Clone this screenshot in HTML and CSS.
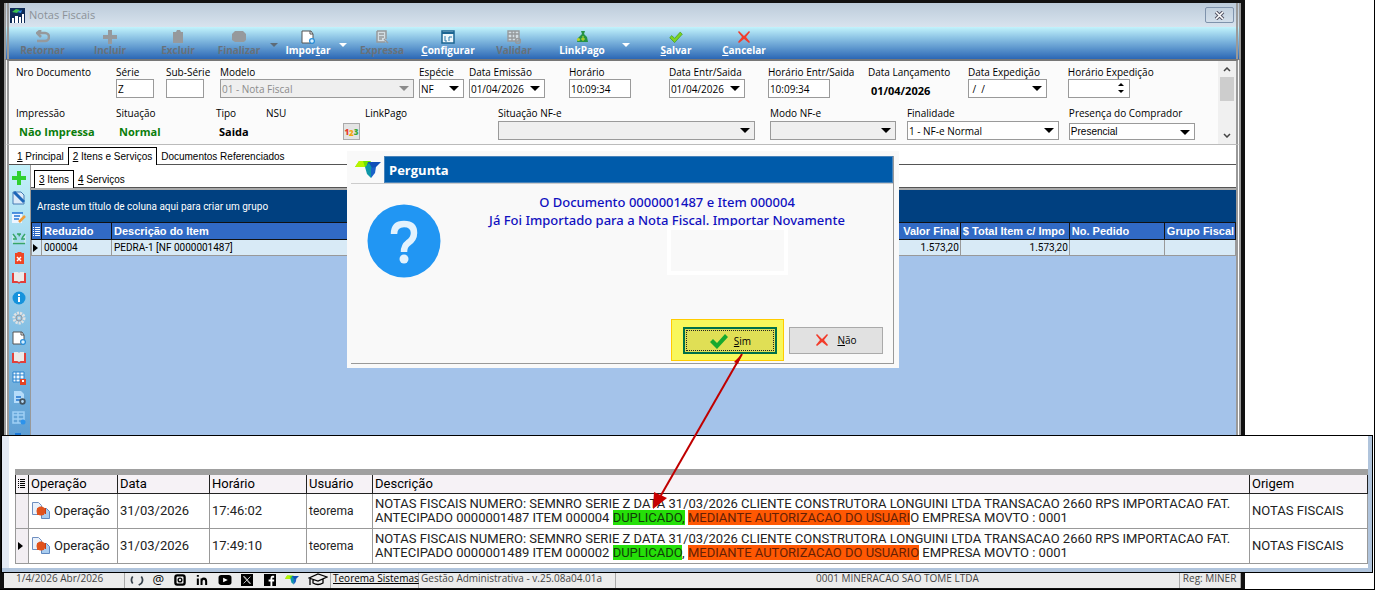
FILE: index.html
```html
<!DOCTYPE html>
<html lang="pt-BR">
<head>
<meta charset="utf-8">
<title>Notas Fiscais</title>
<link rel="stylesheet" href="styles.css">
</head>
<body>
<svg class="defs" aria-hidden="true">
  <symbol id="i-check" viewBox="0 0 20 20"><path d="M1 11 4 8l4 4L16 3l3 3L8 18z"/></symbol>
  <symbol id="i-x" viewBox="0 0 14 14"><path d="M1 2 2 1l5 5 5-5 1 1-4 5 4 5-1 1-5-4-5 4-1-1 4-5z"/></symbol>
  <symbol id="i-logo" viewBox="0 0 26 17"><path d="M4 0h12l-3 6H0z" fill="#6fe300"/><path d="M0 6 4 0h4l2 6z" fill="#b8f500"/><path d="M13 1h13l-6 6-4 1-4-4z" fill="#1150b8"/><path d="m10 6 4-4 3 5-1 10-4-4z" fill="#0e97a8"/><path d="m16 7 5-1-1 6-4 5z" fill="#1a62c8"/></symbol>
  <symbol id="i-book" viewBox="0 0 14 12"><path d="M0 1h2v8h3l2 1 2-1h3V1h2v10H8l-1 1-1-1H0z" fill="#e2403a"/><path d="M2 0h4l1 1 1-1h4v9H8l-1 1-1-1H2z" fill="#eceae8"/></symbol>
  <symbol id="i-page" viewBox="0 0 14 14"><path d="M1 1h9l2 3v9H1z" fill="#fff" stroke="#555"/><path d="M9 1v3h3" fill="none" stroke="#555"/><circle cx="11" cy="11" r="2.4" fill="#d5efff" stroke="#2b8ed8" stroke-width="1.3"/></symbol>
  <symbol id="i-list" viewBox="0 0 7 9"><path d="M0 .5h1M2 .5h5M0 2.500h1M2 2.500h5M0 4.500h1M2 4.500h5M0 6.500h1M2 6.500h5M0 8.500h1M2 8.500h5" stroke="currentColor" fill="none"/></symbol>
  <symbol id="i-op" viewBox="0 0 18 17"><path d="M.5.5h6l3 3v9h-9z" fill="#eaf1fb" stroke="#6f8fc0"/><path d="M9.500 6.500h5l3 3v7h-8z" fill="#a9cdf0" stroke="#5f88c0"/><path d="M5 6h7v7H5z" fill="#e0531d"/><circle cx="9" cy="9" r="4.500" fill="#e0531d"/><path d="M13.500 6v6" stroke="#c83c12"/></symbol>
</svg>
<div class="screen">
  <main class="app">
    <header class="titlebar">
      <svg class="app-icon" viewBox="0 0 15 15"><path fill="#0d2b57" d="M0 0h15v15H0z"/><path d="M2 4 6 1l4 1-3 3z" fill="#39c04a"/><path d="m7 4 5-2-1 3z" fill="#2a86e8"/><path d="M2 10h2v5H2zM5 8h3v7H5zM9 9h2v6H9zM12 6h2v9h-2z" fill="#fff"/></svg>
      <h1>Notas Fiscais</h1>
      <button class="close" aria-label="Fechar"><svg viewBox="0 0 11 9"><path d="m2 1 7 7M9 1 2 8" stroke="#556" stroke-width="3.600"/><path d="m2 1 7 7M9 1 2 8" stroke="#fff" stroke-width="1.600"/></svg></button>
    </header>
    <nav class="toolbar">
      <button class="tool" disabled><svg viewBox="0 0 14 14"><path d="M2 3h7a3 3 0 0 1 0 8H1M5 0 1 3l4 4" fill="none" stroke="#96999c" stroke-width="2.600"/></svg>Retornar</button>
      <button class="tool" disabled><svg viewBox="0 0 14 14"><path d="M5 0h4v5h5v4H9v5H5V9H0V5h5z" fill="#96999c"/></svg>Incluir</button>
      <button class="tool" disabled><svg viewBox="0 0 14 14"><path d="M2 2h3l1-2h3l1 2h2v11H2z" fill="#96999c"/></svg>Excluir</button>
      <button class="tool slim" disabled><svg viewBox="0 0 14 14"><path d="M3 1h8l3 3v6l-2 2H3l-3-2V4z" fill="#96999c"/></svg>Finalizar</button>
      <button class="drop off" aria-label="Mais opções de finalizar" disabled></button>
      <button class="tool slim"><svg><use href="#i-page"/></svg><span>Impor<u>t</u>ar</span></button>
      <button class="drop" aria-label="Mais opções de importar"></button>
      <button class="tool mid" disabled><svg viewBox="0 0 14 14"><path d="M2 1h9v11H2z" fill="#d3dde3"/><path d="M2 1h9v8M2 1v11h8M4 4h5M4 7h5M4 9h3M9 9l4 4" fill="none" stroke="#96999c" stroke-width="1.500"/></svg>Expressa</button>
      <button class="tool"><svg viewBox="0 0 14 14"><path d="M1 1h12v12H1z" fill="#eef7fb" stroke="#1c6592" stroke-width="1.500"/><path d="M1 3h12" stroke="#1c6592" stroke-width="2"/><path d="M4 6v5h2M8 11V7h3" fill="none" stroke="#2d7cae"/></svg><span><u>C</u>onfigurar</span></button>
      <button class="tool mid" disabled><svg viewBox="0 0 14 14"><path d="M1 1h11v10H1z" fill="#d3dde3"/><path d="M1 1h11v10H1zM1 4h11M1 8h8M5 1v10M8 1v7" fill="none" stroke="#96999c" stroke-width="1.400"/><circle cx="11" cy="11" r="2.500" fill="none" stroke="#96999c" stroke-width="1.500"/></svg>Validar</button>
      <button class="tool wide"><svg viewBox="0 0 14 14"><path d="M6 1h4l-1 3 3 3 1 5H2l1-4 4-4z" fill="#269344"/><path d="M8 6v5M6 9h4" stroke="#cfe02b"/><circle cx="3.500" cy="9.500" r="1.600" fill="#b7d426"/></svg>LinkPago</button>
      <button class="drop" aria-label="Mais opções de LinkPago"></button>
      <button class="tool save"><svg class="green"><use href="#i-check"/></svg><span><u>S</u>alvar</span></button>
      <button class="tool"><svg class="red"><use href="#i-x"/></svg><span><u>C</u>ancelar</span></button>
    </nav>
    <section class="form">
      <div class="fields">
        <div class="row first">
          <div class="field"><span>Nro Documento</span></div>
          <div class="field"><label for="serie">Série</label><input id="serie" class="w38" value="Z"></div>
          <div class="field"><label for="sub">Sub-Série</label><input id="sub" class="w38"></div>
          <div class="field"><label for="modelo">Modelo</label><div class="combo dis w194"><select id="modelo" disabled><option>01 - Nota Fiscal</option></select></div></div>
          <div class="field"><label for="especie">Espécie</label><div class="combo w45"><select id="especie"><option>NF</option></select></div></div>
          <div class="field"><label for="emissao">Data Emissão</label><div class="combo w76"><select id="emissao"><option>01/04/2026</option></select></div></div>
          <div class="field"><label for="hora">Horário</label><input id="hora" class="w62" value="10:09:34"></div>
          <div class="field"><label for="entr">Data Entr/Saida</label><div class="combo w76"><select id="entr"><option>01/04/2026</option></select></div></div>
          <div class="field"><label for="hentr">Horário Entr/Saida</label><input id="hentr" class="w62" value="10:09:34"></div>
          <div class="field"><span>Data Lançamento</span><strong class="date">01/04/2026</strong></div>
          <div class="field"><label for="exp">Data Expedição</label><div class="combo w79"><select id="exp"><option>&nbsp;/&nbsp; /</option></select></div></div>
          <div class="field"><label for="hexp">Horário Expedição</label><div class="spin"><input id="hexp" class="w62"><i class="up"></i><i class="down"></i></div></div>
        </div>
        <div class="row second">
          <div class="field"><span>Impressão</span><strong class="ok clip">Não Impressa</strong></div>
          <div class="field"><span>Situação</span><strong class="ok">Normal</strong></div>
          <div class="field"><span>Tipo</span><strong>Saida</strong></div>
          <div class="field"><span>NSU</span><button class="nums" aria-label="Numeração"><b>1</b><b>2</b><b>3</b></button></div>
          <div class="field"><span>LinkPago</span></div>
          <div class="field"><label for="sit">Situação NF-e</label><div class="combo grey w257"><select id="sit"><option></option></select></div></div>
          <div class="field"><label for="modo">Modo NF-e</label><div class="combo grey w126"><select id="modo"><option></option></select></div></div>
          <div class="field"><label for="fin">Finalidade</label><div class="combo w152"><select id="fin"><option>1 - NF-e Normal</option></select></div></div>
          <div class="field"><label for="pres">Presença do Comprador</label><div class="combo gdi w126"><select id="pres"><option>Presencial</option></select></div></div>
        </div>
      </div>
      <div class="scroll" aria-hidden="true"><svg viewBox="0 0 8 5"><path d="m1 4 3-3 3 3"/></svg><i></i><svg viewBox="0 0 8 5"><path d="m1 1 3 3 3-3"/></svg></div>
    </section>
    <div class="tabs main-tabs">
      <button><u>1</u> Principal</button><button class="on"><u>2</u> Itens e Serviços</button><button>Documentos Referenciados</button>
    </div>
    <div class="work">
      <aside class="side">
        <svg viewBox="0 0 14 14"><path d="M5 0h4v5h5v4H9v5H5V9H0V5h5z" fill="#2fd02f"/></svg>
        <svg viewBox="0 0 14 14"><path d="M1 1h8l3 3v9H1z" fill="#dceaf8" stroke="#467cb4"/><path d="m2 1 10 10" stroke="#1c66b8" stroke-width="3"/></svg>
        <svg viewBox="0 0 14 14"><path d="M0 2h10v10H0z" fill="#edf5ff"/><path d="M0 2h11M2 5h6M2 8h5" stroke="#2273d6" stroke-width="1.500"/><path d="m7 11 6-6" stroke="#f19b38" stroke-width="2.500"/></svg>
        <svg viewBox="0 0 14 14"><path d="M1 4v8h12V4" stroke="#e4f4f2" fill="none"/><path d="M1 12.500h12M1 3l3 4M13 3l-3 4M5 3h4M1 8h4M9 8h4" stroke="#37a568" stroke-width="1.400" fill="none"/><path d="M6 3h3L7 6z" fill="#37a568"/></svg>
        <svg viewBox="0 0 14 14"><path d="M3 2h2l1-1h3l1 1h2v11H3z" fill="#ee4724"/><path d="m5 6 4 4M9 6l-4 4" stroke="#fff" stroke-width="1.500"/></svg>
        <svg><use href="#i-book"/></svg>
        <svg viewBox="0 0 14 14"><circle cx="7" cy="7" r="6.500" fill="#1593dc"/><path d="M7 3v2M7 6v5" stroke="#fff" stroke-width="2"/></svg>
        <svg viewBox="0 0 14 14"><circle cx="7" cy="7" r="5" fill="none" stroke="#e2e2e2" stroke-width="3" stroke-dasharray="2 1"/><circle cx="7" cy="7" r="3" fill="none" stroke="#9b9ba0"/><circle cx="7" cy="7" r="1.500" fill="#ddd"/></svg>
        <svg><use href="#i-page"/></svg>
        <svg><use href="#i-book"/></svg>
        <svg viewBox="0 0 14 14"><path d="M1 1h11v10H1z" fill="#f2faff"/><path d="M1 1h11v10H1zM1 4h11M1 8h11M4 1v10M8 1v10" fill="none" stroke="#2b83cf"/><path d="M8 8h6v6H8z" fill="#e44424"/><path d="M10 9h2v2h-2z" fill="#fff"/></svg>
        <svg viewBox="0 0 14 14"><path d="M2 0h7l3 3v9H2z" fill="#b5dcfa"/><path d="M4 6h5M4 9h4" stroke="#1f73d0" stroke-width="1.500"/><circle cx="10.500" cy="10.500" r="2.300" fill="none" stroke="#43535f" stroke-width="1.800"/></svg>
        <svg viewBox="0 0 14 14"><path d="M1 1h11v11H1zM1 4h11M1 8h11M6 1v11" fill="none" stroke="#9fd0f5" stroke-width="1.500"/><circle cx="11" cy="11" r="2.500" fill="#2c93ec"/></svg>
        <svg viewBox="0 0 14 14"><path d="M3 2h6v5H3z" fill="#1a78d8"/></svg>
      </aside>
      <section class="content">
        <div class="tabs sub"><button class="on"><u>3</u> Itens</button><button><u>4</u> Serviços</button></div>
        <div class="group">Arraste um título de coluna aqui para criar um grupo</div>
        <table class="items">
          <colgroup><col class="c-mark"><col class="c-red"><col class="c-desc"><col class="c-val"><col class="c-tot"><col class="c-ped"><col class="c-grp"></colgroup>
          <thead><tr><th><svg class="list"><use href="#i-list"/></svg></th><th>Reduzido</th><th>Descrição do Item</th><th class="num">Valor Final</th><th>$ Total Item c/ Impo</th><th>No. Pedido</th><th>Grupo Fiscal</th></tr></thead>
          <tbody><tr><td class="mark"><i class="caret"></i></td><td>000004</td><td>PEDRA-1 [NF 0000001487]</td><td class="num">1.573,20</td><td class="num">1.573,20</td><td></td><td></td></tr></tbody>
        </table>
      </section>
    </div>
    <footer class="status">
      <span class="s-date">1/4/2026 Abr/2026</span>
      <span class="s-icons">
        <svg viewBox="0 0 16 14"><path d="M3 3a5 6 0 0 0 0 8M13 3a5 6 0 0 1 0 8l-3 2" fill="none" stroke="#37414b" stroke-width="2"/></svg>
        <b>@</b>
        <svg viewBox="0 0 13 13"><rect x="1.500" y="1.500" width="10" height="10" rx="2" fill="none" stroke="#000" stroke-width="2.500"/><circle cx="6.500" cy="6.500" r="2" fill="none" stroke="#000" stroke-width="1.500"/></svg>
        <svg viewBox="0 0 13 13"><path d="M2 5v7M2 1v2M6 12V5M6 8c0-4 5-4 5 0v4" fill="none" stroke="#000" stroke-width="2.200"/></svg>
        <svg viewBox="0 0 14 13"><rect y="1" width="14" height="11" rx="3"/><path d="m5 4 5 2.500L5 9z" fill="#fff"/></svg>
        <svg viewBox="0 0 14 14"><path d="M0 0h14v14H0z"/><path d="m3 3 7 8h1L4 3zM11 3l-8 8" fill="none" stroke="#ddd"/></svg>
        <svg viewBox="0 0 13 13"><path d="M0 0h13v13H0z"/><path d="M11 3H9Q8 3 8 5v8M5 7h6" fill="none" stroke="#fff" stroke-width="2"/></svg>
        <svg><use href="#i-logo"/></svg>
        <svg class="cap" viewBox="0 0 20 14"><path d="m1 5 9-4 9 3-9 4zM5 6v4q5 3 10 0V6M2 5v7" fill="#eee" stroke="#000" stroke-width="1.300"/></svg>
      </span>
      <a class="s-link" href="#">Teorema Sistemas</a>
      <span class="s-ver">Gestão Administrativa - v.25.08a04.01a</span>
      <span class="s-firm">0001 MINERACAO SAO TOME LTDA</span>
      <span class="s-reg">Reg: MINER</span>
    </footer>
  </main>

  <section class="dialog" role="dialog" aria-labelledby="dlg">
    <div class="frame">
      <header><svg><use href="#i-logo"/></svg><h2 id="dlg">Pergunta</h2></header>
      <div class="ask">
        <svg class="quest" viewBox="0 0 74 74"><circle cx="37" cy="37" r="36.500" fill="#2196f3"/><path d="M27 30q0-10 10-10t10 9q0 6-6 10-4 3-4 9" fill="none" stroke="#e3f2fd" stroke-width="6.500"/><circle cx="37" cy="55" r="4.500" fill="#e3f2fd"/></svg>
        <p>O Documento 0000001487 e Item 000004<br>Já Foi Importado para a Nota Fiscal. Importar Novamente</p>
      </div>
      <div class="answers">
        <div class="glow"><button class="yes"><svg><use href="#i-check"/></svg><span><u>S</u>im</span></button></div>
        <button class="no"><svg><use href="#i-x"/></svg><span><u>N</u>ão</span></button>
      </div>
    </div>
    <div class="blank"></div>
  </section>

  <section class="log">
    <table>
      <colgroup><col class="l-mark"><col class="l-op"><col class="l-date"><col class="l-time"><col class="l-user"><col><col class="l-orig"></colgroup>
      <thead><tr><th><svg class="list"><use href="#i-list"/></svg></th><th>Operação</th><th>Data</th><th>Horário</th><th>Usuário</th><th>Descrição</th><th>Origem</th></tr></thead>
      <tbody>
        <tr><td class="mark"></td><td><div class="op"><svg><use href="#i-op"/></svg>Operação</div></td><td>31/03/2026</td><td>17:46:02</td><td class="user">teorema</td><td>NOTAS FISCAIS NUMERO: SEMNRO SERIE Z DATA 31/03/2026 CLIENTE CONSTRUTORA LONGUINI LTDA TRANSACAO 2660 RPS IMPORTACAO FAT.<br>ANTECIPADO 0000001487 ITEM 000004 <mark class="g">DUPLICADO,</mark> <mark class="o">MEDIANTE AUTORIZACAO DO USUARI</mark>O EMPRESA MOVTO : 0001</td><td>NOTAS FISCAIS</td></tr>
        <tr><td class="mark"><i class="caret"></i></td><td><div class="op"><svg><use href="#i-op"/></svg>Operação</div></td><td>31/03/2026</td><td>17:49:10</td><td class="user">teorema</td><td>NOTAS FISCAIS NUMERO: SEMNRO SERIE Z DATA 31/03/2026 CLIENTE CONSTRUTORA LONGUINI LTDA TRANSACAO 2660 RPS IMPORTACAO FAT.<br>ANTECIPADO 0000001489 ITEM 000002 <mark class="g">DUPLICADO</mark>, <mark class="o">MEDIANTE AUTORIZACAO DO USUARIO</mark> EMPRESA MOVTO : 0001</td><td>NOTAS FISCAIS</td></tr>
      </tbody>
    </table>
  </section>
  <svg class="arrow" viewBox="0 0 92 156" aria-hidden="true"><path d="M90 1 8 144" stroke="#c00000" stroke-width="2"/><path d="m90 1-4 10-4-2z" fill="#c00000"/><path d="m1 156 1-17 13 6z" fill="#c80000"/></svg>
</div>
</body>
</html>
```

FILE: styles.css
```css
* { box-sizing: border-box; }
body { margin: 0; background: #fff; font: 10px/14px "Open Sans", "Noto Sans", sans-serif; color: #000; }
button, input, select { font: inherit; color: inherit; margin: 0; padding: 0; border: 0; background: none; }
svg { display: block; flex: none; }
.defs { position: absolute; width: 0; height: 0; }
.screen { position: relative; min-height: 100vh; display: flex; border: solid #000; border-width: 0 1px 1px 0; }

/* Main window */
.app { width: 90.6%; display: flex; flex-direction: column; padding: 3px 4px 1px; background: #111; }
.titlebar, .toolbar, .form, .main-tabs, .work { border: 0 solid #777; border-left: 5px double #999; border-right: 5px double #999; }
.titlebar { height: 24px; display: flex; align-items: center; gap: 4px; padding-left: 1px; background: linear-gradient(#bccbda, #d8e3ee); }
.app-icon { width: 15px; height: 15px; }
h1 { flex: 1; margin: 0; font-size: 11px; font-weight: 400; color: #8c9298; }
.close { width: 29px; height: 16px; margin-right: 2px; display: grid; place-items: center; border: 1px solid #7f93ac; border-radius: 2px; }
.close svg { width: 11px; height: 9px; }
.toolbar { height: 32px; display: flex; background: linear-gradient(#c2f3fc, #8bc2e4 35%, #2b67b5); }
.tool { flex: none; width: 68px; padding-top: 3px; display: flex; flex-direction: column; align-items: center; font-weight: 700; line-height: 12px; color: #fff; }
.tool:first-child { width: 67px; }
.tool svg { width: 14px; height: 14px; }
.tool:disabled { color: #68717a; }
.tool.slim { width: 54px; }
.tool.mid { width: 64px; }
.tool.wide { width: 72px; }
.tool.save { margin-left: 9px; }
.green { fill: #7ed321; stroke: #3d9b1b; }
.red { fill: #f23b2a; }
.drop { flex: none; width: 15px; display: grid; place-items: center; }
.drop::after { content: ""; border: 4px solid transparent; border-top-color: #fff; border-bottom: 0; margin-top: 4px; }
.drop.off::after { border-top-color: #5d6b78; }

/* Form */
.form { height: 86px; display: flex; background: #fbfbfb; border-top: 2px solid #777; border-bottom: 1px solid #bbb; }
.fields { flex: 1; min-width: 0; padding: 4px 0 0 7px; }
.row { display: grid; height: 41px; }
.first { grid-template-columns: minmax(0,100fr) minmax(0,50fr) minmax(0,54fr) minmax(0,199fr) minmax(0,50fr) minmax(0,100fr) minmax(0,100fr) minmax(0,99fr) minmax(0,100fr) minmax(0,100fr) minmax(0,100fr) minmax(0,150fr); }
.second { grid-template-columns: minmax(0,100fr) minmax(0,100fr) minmax(0,50fr) minmax(0,99fr) minmax(0,133fr) minmax(0,272fr) minmax(0,137fr) minmax(0,162fr) minmax(0,149fr); }
.field { display: flex; flex-direction: column; white-space: nowrap; }
.field > label, .field > span { height: 14px; }
.field strong { padding: 4px 0 0 3px; font: 700 11px/16px "Open Sans", sans-serif; }
.field .ok { color: #0a7d0a; }
.clip { width: 82px; overflow: hidden; }
input, .combo { height: 19px; border: 1px solid #9a9a9a; background: #fff; padding-left: 1px; }
.w38 { width: 38px; } .w45 { width: 45px; } .w62 { width: 62px; } .w76 { width: 76px; } .w79 { width: 79px; } .w126 { width: 126px; } .w152 { width: 152px; } .w194 { width: 194px; } .w257 { width: 257px; }
.combo { position: relative; }
.combo select { appearance: none; width: 100%; height: 17px; display: block; opacity: 1; }
.combo::after { content: ""; position: absolute; right: 4px; top: 6px; border: 5px solid transparent; border-top-color: #000; border-bottom: 0; pointer-events: none; }
.dis { background: #efefef; color: #8b8b8b; }
.dis::after { border-top-color: #8b8b8b; }
.grey { background: #efefef; }
.second .combo { margin-top: 1px; }
.second .gdi { height: 17px; margin-top: 3px; font-family: "Liberation Sans", sans-serif; }
.gdi select { height: 15px; }
.spin { position: relative; width: 62px; }
.spin input { display: block; }
.spin i { position: absolute; right: 6px; border: 3px solid transparent; }
.spin .up { top: 4px; border-bottom-color: #000; border-top: 0; }
.spin .down { top: 11px; border-top-color: #000; border-bottom: 0; }
.nums { width: 17px; height: 17px; margin: 3px 5px 0 0; align-self: flex-end; display: flex; align-items: center; justify-content: center; background: #e4e4e4; border: 1px solid #aaa; font: 700 8px/12px "Open Sans", sans-serif; }
.nums b { color: #e83c2c; } .nums b + b { color: #f4a70c; padding-top: 3px; } .nums b + b + b { color: #38a838; padding: 0; }
.scroll { width: 18px; padding: 6px 0; display: flex; flex-direction: column; align-items: center; background: #f0f0f0; }
.scroll svg { width: 8px; height: 5px; fill: none; stroke: #444; stroke-width: 1.500; }
.scroll i { width: 14px; height: 24px; margin: 5px 0 auto; background: #cdcdcd; }

/* Tabs and grid */
.tabs { height: 20px; display: flex; align-items: flex-end; background: #fff; font: 10px/14px "Liberation Sans", sans-serif; box-shadow: inset 0 -1px #555; }
.main-tabs { padding-left: 4px; }
.tabs button { height: 16px; padding: 0 4px; white-space: nowrap; }
.tabs .on { height: 18px; background: #fff; border: 1px solid #000; border-bottom: 0; }
.work { flex: 1; display: flex; background: #fff; }
.side { width: 21px; padding: 6px 0 0 3px; display: flex; flex-direction: column; gap: 6px; background: linear-gradient(#c4f1fa, #68a8d9 60%, #2f6db9); }
.side svg { width: 14px; height: 14px; }
.content { flex: 1; min-width: 0; background: #a4c3ea; border-left: 1px solid #999; font: 10px/14px Roboto, sans-serif; }
.sub { height: 23px; padding-left: 3px; }
.group { height: 34px; padding: 0 6px; border-top: 2px solid #aaa; background: #004080; color: #fff; line-height: 34px; }
.items, .log table { width: 100%; border-collapse: collapse; table-layout: fixed; }
.items th { height: 17px; padding: 0 2px; background: #316ac5; color: #fff; text-align: left; border: 1px solid #111; white-space: nowrap; overflow: hidden; font: 700 11px/14px "Liberation Sans", sans-serif; }
.items td { height: 16px; padding: 0 2px; line-height: 14px; background: #d8eaf6; border: 1px solid #999; }
.items .num { text-align: right; padding-left: 0; padding-right: 1px; }
.c-mark { width: 10px; } .c-red { width: 70px; } .c-val { width: 80px; } .c-tot { width: 109px; } .c-ped { width: 95px; } .c-grp { width: 71px; }
.items th:first-child, .items .mark { padding: 0 1px; }
.list { width: 7px; height: 9px; }
.caret { display: block; width: 0; border: 4px solid transparent; border-left: 5px solid #000; border-right: 0; }

/* Status bar */
.status { height: 17px; display: flex; background: #ececec; color: #444; white-space: nowrap; overflow: hidden; line-height: 15px; }
.status > * { border-right: 1px solid #aaa; }
.s-date { width: 121px; padding-left: 12px; }
.s-icons { width: 206px; padding: 0 2px 0 5px; display: flex; align-items: center; justify-content: space-between; }
.s-icons svg { width: 14px; height: 12px; }
.s-icons b { font-size: 13px; font-weight: 400; color: #000; }
.s-icons .cap { width: 20px; height: 14px; }
.s-link { width: 88px; padding-left: 2px; color: #000; }
.s-ver { width: 197px; padding-left: 2px; }
.s-firm { flex: 1; text-align: center; }
.s-reg { width: 61px; padding-left: 3px; }

/* Question dialog */
.dialog { position: absolute; left: 347px; top: 151px; width: 552px; height: 217px; padding: 5px 5px 4px 4px; background: #f9f9f9; }
.frame { height: 100%; display: flex; flex-direction: column; border: solid #999; border-width: 0 1px 1px 0; }
.frame header { height: 28px; display: flex; border-bottom: 1px solid #ccc; }
.frame header svg { width: 26px; height: 17px; margin: 5px 3px 0 4px; }
h2 { flex: 1; margin: 0; padding-left: 4px; background: #005baa; color: #fff; font: 700 13px/26px "Open Sans", sans-serif; border: 1px solid #4a84ba; height: 27px; }
.ask { flex: 1; display: flex; padding: 9px 0 0 16px; }
.quest { width: 74px; height: 74px; margin-top: 11px; }
.ask p { flex: 1; margin: 0; color: #1010c0; text-align: center; font: 500 13px/18px "Noto Sans", sans-serif; }
.answers { display: flex; justify-content: flex-end; align-items: center; gap: 5px; padding: 0 10px 2px 0; }
.glow { padding: 7px 6px 6px 11px; background: #f8f75c; border: 1px solid #fc0; }
.answers button { width: 94px; height: 27px; display: flex; align-items: center; justify-content: center; gap: 5px; background: #e1e1e1; border: 1px solid #aaa; }
.answers .yes { background: #e0df55; border: 2px solid #00704a; outline: 1px dotted #222; outline-offset: -4px; }
.yes svg { width: 20px; height: 20px; fill: #17a92f; }
.no svg { width: 14px; height: 14px; fill: #f23b2a; margin-right: 3px; }
.blank { position: absolute; left: 320px; top: 75px; width: 121px; height: 49px; background: #f9f9f9; border: 4px solid #fff; }

/* Operation log */
.log { position: absolute; left: 1px; right: 1px; top: 435px; height: 138px; padding: 33px 0 0 13px; background: #fff; border: 1px solid #000; box-shadow: inset -4px -4px #b0c4dc, inset 7px 0 #e4eaf4; }
.log table { width: calc(100% - 4px); border-top: 6px solid #a0a0a0; font: 13px/14px Roboto, sans-serif; }
.log th { height: 21px; padding: 0 2px; background: #f6f2f6; border: 1px solid #222; text-align: left; font-weight: 400; }
.log thead th { border-top-width: 6px; border-top-color: #a0a0a0; }
.log td { height: 35px; padding: 0 2px; border: 1px solid #999; color: #222; white-space: nowrap; }
.l-mark { width: 13px; } .l-op { width: 89px; } .l-date { width: 92px; } .l-time { width: 97px; } .l-user { width: 66px; } .l-orig { width: 118px; }
.log .mark { background: #f2eef2; }
.log .user { font-size: 12px; }
.op { display: flex; align-items: center; gap: 4px; padding-left: 1px; }
.op svg { width: 18px; height: 17px; }
mark { color: #103c08; background: #25df08; }
mark.o { color: #651f05; background: #ff5803; }
.arrow { position: absolute; left: 652px; top: 353px; width: 92px; height: 156px; }
```
